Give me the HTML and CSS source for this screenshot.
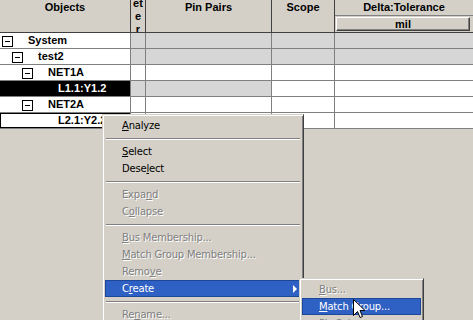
FILE: index.html
```html
<!DOCTYPE html>
<html lang="en">
<head>
<meta charset="UTF-8"><meta name="viewport" content="width=device-width,initial-scale=1.0">
<title>Objects</title>
<link rel="stylesheet" href="styles.css">
</head>
<body>
<div class="grid head">
  <div class="hd">Objects</div>
  <div class="hd narrow"><span>et</span><span>e</span><span>r</span></div>
  <div class="hd">Pin Pairs</div>
  <div class="hd">Scope</div>
  <div class="hd delta">
    <div class="dt">Delta:Tolerance</div>
    <div class="unit">mil</div>
  </div>
</div>

<div class="grid rows">
  <div class="obj l0"><svg class="box" width="11" height="11"><rect x=".5" y=".5" width="10" height="10"/><path d="M3 5.5h5"/></svg>System</div>
  <div class="g"></div><div class="g"></div><div class="g"></div><div class="g"></div>

  <div class="obj l1"><svg class="box" width="11" height="11"><rect x=".5" y=".5" width="10" height="10"/><path d="M3 5.5h5"/></svg>test2</div>
  <div class="g"></div><div class="g"></div><div class="g"></div><div class="g"></div>

  <div class="obj l2"><svg class="box" width="11" height="11"><rect x=".5" y=".5" width="10" height="10"/><path d="M3 5.5h5"/></svg>NET1A</div>
  <div class="w"></div><div class="w"></div><div class="w"></div><div class="w"></div>

  <div class="obj leaf sel">L1.1:Y1.2</div>
  <div class="g"></div><div class="g"></div><div class="w"></div><div class="w"></div>

  <div class="obj l2"><svg class="box" width="11" height="11"><rect x=".5" y=".5" width="10" height="10"/><path d="M3 5.5h5"/></svg>NET2A</div>
  <div class="w"></div><div class="w"></div><div class="w"></div><div class="w"></div>

  <div class="obj leaf focus">L2.1:Y2.2</div>
  <div class="w"></div><div class="w"></div><div class="w"></div><div class="w"></div>
</div>

<!-- context menu -->
<div class="menu main">
  <div class="mi"><u>A</u>nalyze</div>
  <div class="sep"></div>
  <div class="mi"><u>S</u>elect</div>
  <div class="mi">Dese<u>l</u>ect</div>
  <div class="sep"></div>
  <div class="mi dis">Expa<u>n</u>d</div>
  <div class="mi dis">C<u>o</u>llapse</div>
  <div class="sep"></div>
  <div class="mi dis"><u>B</u>us Membership...</div>
  <div class="mi dis"><u>M</u>atch Group Membership...</div>
  <div class="mi dis">Remo<u>v</u>e</div>
  <div class="mi on">C<u>r</u>eate<span class="arrow"></span></div>
  <div class="sep"></div>
  <div class="mi dis">Re<u>n</u>ame...</div>
</div>

<div class="menu sub">
  <div class="mi dis"><u>B</u>us...</div>
  <div class="mi on"><u>M</u>atch Group...</div>
  <div class="mi dis"><u>P</u>in Pair...</div>
</div>

<svg class="cursor" width="13" height="21"><path d="M.5 .5V16.5L4.5 12.5L7 18.5L9.5 17.5L7 11.5H12Z"/></svg>
</body>
</html>
```

FILE: styles.css
```css
:root{--face:#d4d0c8;--line:#808080;--dark:#404040;--cell:#d6d6d6;--hi:#2f61c4}
html,body{height:100%;overflow:hidden}
body{margin:0;background:var(--face);font-family:'Liberation Sans',Arial,sans-serif;color:#000;position:relative}

/* -------- grid ---------- */
.grid{display:grid;grid-template-columns:130px 14px 125px 62px 1fr;column-gap:1px}
.head{grid-template-rows:32px;background:var(--dark);border-bottom:1px solid var(--dark)}
.rows{grid-auto-rows:15px;row-gap:1px;background:var(--line);border-bottom:1px solid var(--line)}
.hd{background:var(--face);text-align:center;font-weight:bold;font-size:11px;line-height:13px;padding-top:1px;overflow:hidden}
.narrow{padding-top:0}
.narrow span{display:block;line-height:13px}
.narrow span:first-child{margin-top:-3px}
.delta{display:flex;flex-direction:column;padding:0}
.dt{height:15px;line-height:15px;border-bottom:1px solid var(--line)}
.unit{height:12px;line-height:12px;margin:1px 3px 0 1px;border:1px solid;border-color:#fff var(--dark) var(--dark) #fff;box-shadow:inset -1px -1px var(--line);font-size:11px}
.g{background:var(--cell)}
.w{background:#fff}

/* -------- tree column ---------- */
.obj{background:#fff;display:flex;align-items:center;font-weight:bold;font-size:11px;line-height:15px;white-space:nowrap;overflow:hidden}
.l0{padding-left:2px}
.l1{padding-left:12px}
.l2{padding-left:22px}
.leaf{padding-left:58px}
.box{display:block;margin:2px 15px 0 0;flex:none}
.box rect{fill:#fff;stroke:#000}
.box path{stroke:#000}
.sel{background:#000;color:#fff}
.focus{outline:1px solid #000;outline-offset:-1px}

/* -------- menus ---------- */
.menu{position:absolute;box-sizing:border-box;background:var(--face);border:1px solid;border-color:var(--face) var(--dark) var(--dark) var(--face);box-shadow:inset 1px 1px #fff,inset -1px -1px var(--line);padding:2px}
.main{left:102px;top:114px;width:202px}
.sub{left:299px;top:278px;width:125px}
.mi{position:relative;height:17px;line-height:17px;padding-left:17px;font-family:'DejaVu Sans',sans-serif;font-size:10px;letter-spacing:-.2px;white-space:nowrap}
.mi.dis{color:var(--line);text-shadow:1px 1px #fff}
.mi.on{background:var(--hi);color:#fff;box-shadow:inset 0 0 0 1px #1d4799}
.sep{height:1px;background:var(--line);border-bottom:1px solid #fff;margin:4px 1px 3px}
.arrow{position:absolute;right:4px;top:5px;border-left:4px solid #fff;border-top:4px solid transparent;border-bottom:4px solid transparent}
.cursor{position:absolute;left:353px;top:299px}
.cursor path{fill:#fff;stroke:#000}
```
